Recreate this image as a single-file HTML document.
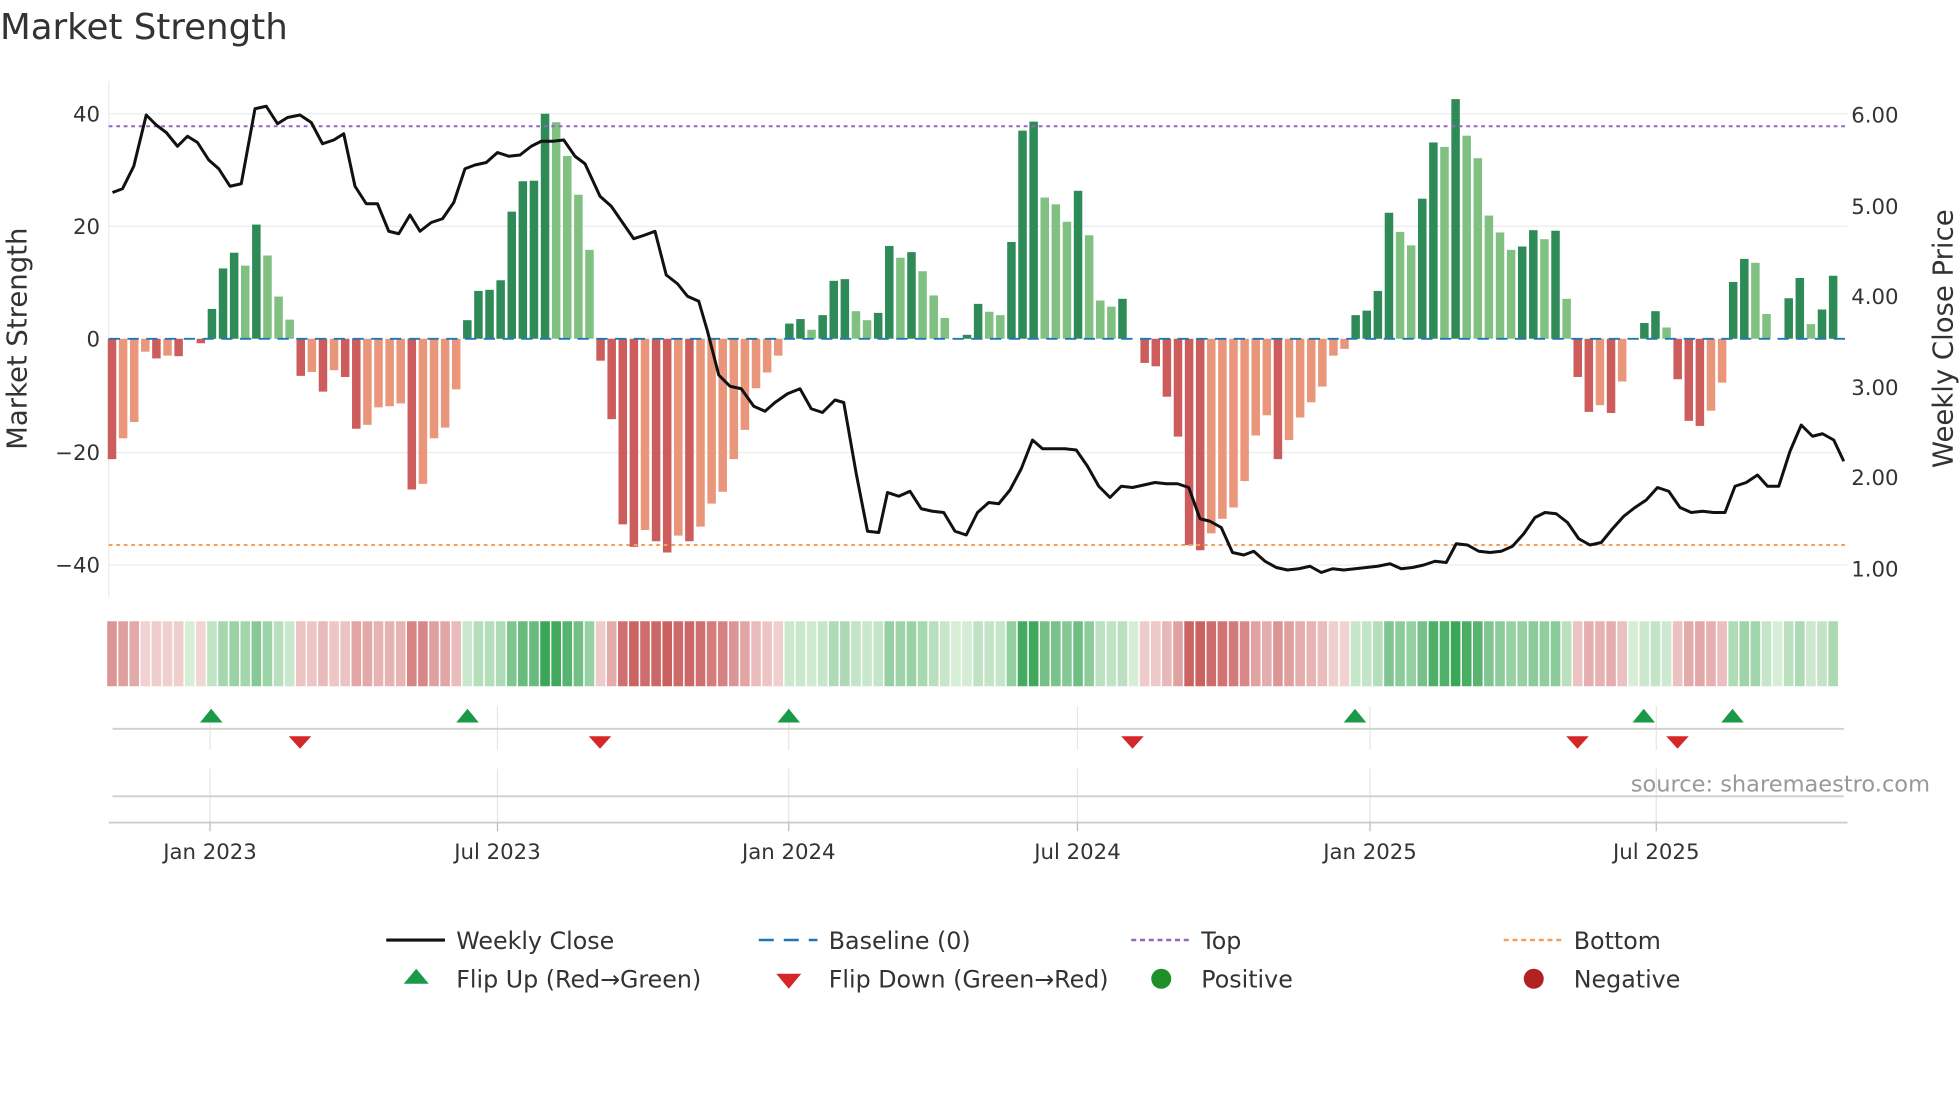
<!DOCTYPE html>
<html><head><meta charset="utf-8"><style>
html,body{margin:0;padding:0;background:#fff;width:1960px;height:1102px;overflow:hidden}
svg{display:block;font-family:"DejaVu Sans","Liberation Sans",sans-serif}
</style></head><body>
<svg id="s" width="1960" height="1102" viewBox="0 0 1568 881.6">
<text x="0" y="31" font-size="28.5" fill="#333">Market Strength</text>
<g stroke="#ececec" stroke-width="1">
<line x1="87" x2="1478" y1="91" y2="91"/><line x1="87" x2="1478" y1="181" y2="181"/>
<line x1="87" x2="1478" y1="362" y2="362"/><line x1="87" x2="1478" y1="452" y2="452"/>
<line x1="87" x2="87" y1="65" y2="478"/>
</g>
<g font-size="17" fill="#333">
<text x="80" y="97" text-anchor="end">40</text><text x="80" y="187" text-anchor="end">20</text>
<text x="80" y="277" text-anchor="end">0</text><text x="80" y="368" text-anchor="end">−20</text>
<text x="80" y="458" text-anchor="end">−40</text>
<text x="1481" y="98">6.00</text><text x="1481" y="171">5.00</text><text x="1481" y="243">4.00</text>
<text x="1481" y="316">3.00</text><text x="1481" y="388">2.00</text><text x="1481" y="461">1.00</text>
</g>
<text transform="translate(21,271) rotate(-90)" font-size="22" fill="#333" text-anchor="middle">Market Strength</text>
<text transform="translate(1562,271) rotate(-90)" font-size="22" fill="#333" text-anchor="middle">Weekly Close Price</text>
<g id="bars"></g>
<line x1="87" x2="1478" y1="271" y2="271" stroke="#1f77b4" stroke-width="1.5" stroke-dasharray="9,6"/>
<line x1="87" x2="1478" y1="101" y2="101" stroke="#9467bd" stroke-width="1.6" stroke-dasharray="3,3"/>
<line x1="87" x2="1478" y1="436" y2="436" stroke="#f0a060" stroke-width="1.6" stroke-dasharray="3,3"/>
<polyline id="pl" fill="none" stroke="#111" stroke-width="2.4" stroke-linejoin="round"/>
<g id="heat"></g>
<g stroke="#e6e6e6" stroke-width="1">
<line x1="168" x2="168" y1="565" y2="600"/><line x1="398" x2="398" y1="565" y2="600"/><line x1="631" x2="631" y1="565" y2="600"/><line x1="862" x2="862" y1="565" y2="600"/><line x1="1096" x2="1096" y1="565" y2="600"/><line x1="1325" x2="1325" y1="565" y2="600"/>
<line x1="168" x2="168" y1="615" y2="658"/><line x1="398" x2="398" y1="615" y2="658"/><line x1="631" x2="631" y1="615" y2="658"/><line x1="862" x2="862" y1="615" y2="658"/><line x1="1096" x2="1096" y1="615" y2="658"/><line x1="1325" x2="1325" y1="615" y2="658"/>
</g>
<line x1="90" x2="1475" y1="583" y2="583" stroke="#d0d0d0" stroke-width="1.5"/>
<line x1="90" x2="1475" y1="637" y2="637" stroke="#d0d0d0" stroke-width="1.5"/>
<line x1="87" x2="1478" y1="658" y2="658" stroke="#ccc" stroke-width="1.5"/>
<g stroke="#bbb"><line x1="168" x2="168" y1="658" y2="665"/><line x1="398" x2="398" y1="658" y2="665"/><line x1="631" x2="631" y1="658" y2="665"/><line x1="862" x2="862" y1="658" y2="665"/><line x1="1096" x2="1096" y1="658" y2="665"/><line x1="1325" x2="1325" y1="658" y2="665"/></g>
<g id="mk"></g>
<g font-size="17" fill="#333" text-anchor="middle">
<text x="168" y="687">Jan 2023</text><text x="398" y="687">Jul 2023</text><text x="631" y="687">Jan 2024</text>
<text x="862" y="687">Jul 2024</text><text x="1096" y="687">Jan 2025</text><text x="1325" y="687">Jul 2025</text>
</g>
<text x="1544" y="633" font-size="18" fill="#999" text-anchor="end">source: sharemaestro.com</text>
<g font-size="19" fill="#333">
<line x1="309" x2="356" y1="752" y2="752" stroke="#111" stroke-width="2.5"/><text x="365" y="759">Weekly Close</text>
<line x1="607" x2="654" y1="752" y2="752" stroke="#1f77b4" stroke-width="2" stroke-dasharray="12,8"/><text x="663" y="759">Baseline (0)</text>
<line x1="905" x2="952" y1="752" y2="752" stroke="#9467bd" stroke-width="2" stroke-dasharray="4,3"/><text x="961" y="759">Top</text>
<line x1="1203" x2="1250" y1="752" y2="752" stroke="#f0a060" stroke-width="2" stroke-dasharray="4,3"/><text x="1259" y="759">Bottom</text>
<polygon points="323,787 333,775 343,787" fill="#1a9a48"/><text x="365" y="790">Flip Up (Red→Green)</text>
<polygon points="621,779 631,791 641,779" fill="#d62728"/><text x="663" y="790">Flip Down (Green→Red)</text>
<circle cx="929" cy="783" r="8" fill="#1f8f2a"/><text x="961" y="790">Positive</text>
<circle cx="1227" cy="783" r="8" fill="#b22222"/><text x="1259" y="790">Negative</text>
</g>
</svg>
<script>
var raw="-21.4d,-17.7l,-14.8l,-2.3l,-3.5d,-3l,-3.1d,0,-0.8d,5.3d,12.5d,15.3d,13l,20.3d,14.8l,7.5l,3.4l,-6.6d,-5.9l,-9.4d,-5.6l,-6.8d,-16d,-15.3l,-12.2l,-12l,-11.5l,-26.8d,-25.8l,-17.7l,-15.8l,-9l,3.3d,8.5d,8.7d,10.4d,22.6d,28d,28.1d,40d,38.5l,32.5l,25.6l,15.8l,-3.9d,"+
"-14.3d,-33d,-37d,-34l,-36d,-38d,-35l,-36d,-33.4l,-29.3l,-27.2l,-21.4l,-16.2l,-8.8l,-6l,-3l,"+
"2.7d,3.5d,1.6l,4.2d,10.3d,10.6d,4.9l,3.3l,4.6d,16.5d,14.4l,15.4d,12l,7.7l,3.7l,0,0.7d,6.2d,4.8l,4.2l,17.2d,37d,38.6d,25.1l,23.9l,20.8l,26.3d,18.4l,"+
"6.8l,5.7l,7.1d,0,-4.3d,-4.9d,-10.3d,-17.4d,-36.7d,-37.6d,-34.6l,-32l,-30l,-25.3l,-17.2l,-13.6l,-21.4d,-18l,-14l,-11.3l,-8.5l,-3l,-1.8l,4.2d,5d,8.5d,22.4d,19l,16.6l,24.9d,34.9d,34.1l,42.6d,36.1l,32.1l,21.9l,18.9l,15.8l,16.4d,19.3d,17.7l,19.2d,7.1l,-6.8d,"+
"-13d,-11.8l,-13.2d,-7.6l,0,2.8d,4.9d,2l,-7.2d,-14.6d,-15.5d,-12.8l,-7.8l,10.1d,14.2d,13.5l,4.4l,0,7.2d,10.8d,2.6l,5.2d,11.2d";
var arr=raw.split(',');var n=arr.length,x0=89.6,x1=1466.5,w=(x1-x0)/(n-1),ns="http://www.w3.org/2000/svg";
function el(g,t,a){var e=document.createElementNS(ns,t);for(var k in a)e.setAttribute(k,a[k]);document.getElementById(g).appendChild(e);}
function lerp(a,b,t){return 'rgb('+a.map(function(c,i){return Math.round(c+(b[i]-c)*t)}).join(',')+')';}
for(var i=0;i<n;i++){var s=arr[i],val=parseFloat(s),dark=s.slice(-1)=='d',cx=x0+i*w,h=Math.abs(val)*4.5;
if(val!=0){var c=val>0?(dark?'#2e8b57':'#80c080'):(dark?'#cd5c5c':'#e9967a');
el('bars','rect',{x:cx-3.4,y:val>0?271-h:271,width:6.8,height:Math.max(h,1),fill:c});}
var t=Math.min(Math.abs(val)/40,1);
var hc=val>=0?lerp([214,237,214],[58,166,87],t):lerp([243,216,216],[200,90,90],t);
el('heat','rect',{x:cx-w/2+0.6,y:497,width:w-1.2,height:52,fill:hc});}
var p=[90,154,98,151,107,133,117,92,125,100,133,106,142,117,150,109,158,114,167,128,175,135,184,149,193,147,204,87,213,85,222,99,230,94,240,92,249,98,258,115,267,112,275,107,284,149,293,163,302,163,311,185,319,187,328,172,336,185,345,178,354,175,363,162,372,135,380,132,389,130,398,122,407,125,416,124,425,117,433,113,442,113,451,112,460,125,468,131,480,157,489,165,498,178,507,191,516,188,524,185,533,220,542,227,550,237,559,241,566,265,575,300,584,309,593,311,603,325,612,329,620,322,630,315,640,311,649,327,658,330,668,320,675,322,685,379,694,425,703,426,710,394,719,397,728,393,737,407,746,409,755,410,764,425,773,428,782,410,791,402,799,403,808,392,817,375,826,352,834,359,843,359,852,359,861,360,870,373,879,389,888,398,897,389,906,390,915,388,924,386,933,387,942,387,951,390,960,415,968,417,977,422,986,442,995,444,1003,441,1012,449,1021,454,1030,456,1039,455,1048,453,1057,458,1066,455,1075,456,1084,455,1093,454,1102,453,1112,451,1121,455,1130,454,1139,452,1148,449,1157,450,1165,435,1174,436,1183,441,1192,442,1201,441,1210,437,1219,427,1228,414,1236,410,1245,411,1254,418,1263,431,1272,436,1281,434,1290,423,1299,413,1308,406,1317,400,1326,390,1335,393,1344,406,1353,410,1362,409,1371,410,1380,410,1388,389,1397,386,1406,380,1414,389,1423,389,1432,361,1441,340,1450,349,1458,347,1467,352,1475,369];
var s2=[];for(i=0;i<p.length;i+=2)s2.push(p[i]+','+p[i+1]);document.getElementById('pl').setAttribute('points',s2.join(' '));
[169,374,631,1084,1315,1386].forEach(function(x){el('mk','polygon',{points:(x-9)+',578 '+x+',567 '+(x+9)+',578',fill:'#1a9a48'});});
[240,480,906,1262,1342].forEach(function(x){el('mk','polygon',{points:(x-9)+',589 '+x+',599 '+(x+9)+',589',fill:'#d62728'});});
</script>
</body></html>
